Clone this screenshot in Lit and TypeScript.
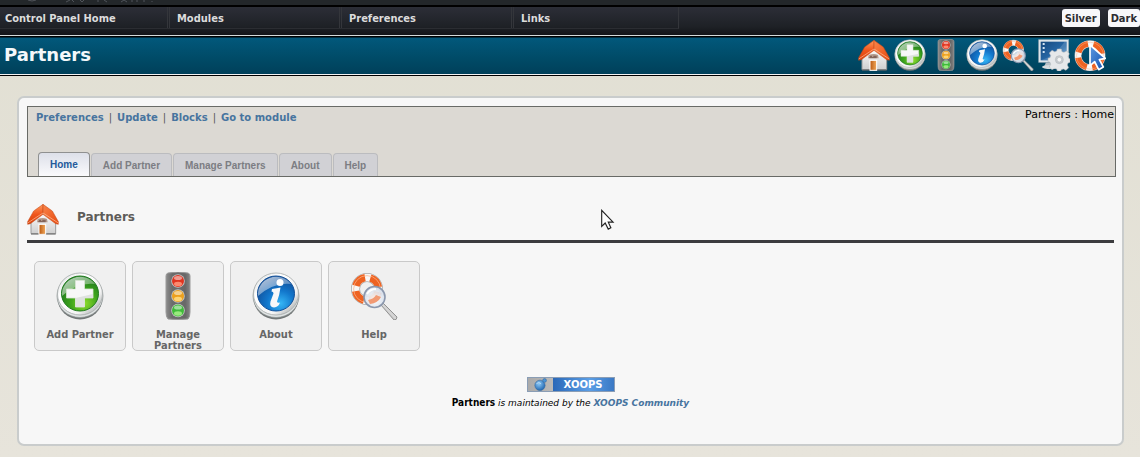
import { LitElement, html, svg, css } from "lit";
import { customElement, property } from "lit/decorators.js";

const home = svg`
  <defs>
    <linearGradient id="roof" x1="0" y1="0" x2="0" y2="1"><stop offset="0" stop-color="#ff9a5c"/><stop offset=".5" stop-color="#f0561c"/><stop offset="1" stop-color="#d8410c"/></linearGradient>
    <linearGradient id="side" x1="0" y1="0" x2="1" y2="1"><stop offset="0" stop-color="#f9854a"/><stop offset="1" stop-color="#e8490f"/></linearGradient>
    <linearGradient id="wall" x1="0" y1="0" x2="0" y2="1"><stop offset="0" stop-color="#fff"/><stop offset="1" stop-color="#cfcfcf"/></linearGradient>
    <linearGradient id="door" x1="0" y1="0" x2="1" y2="0"><stop offset="0" stop-color="#b8570f"/><stop offset="1" stop-color="#f3ab5e"/></linearGradient>
  </defs>
  <path d="M6 28 24 12 43 28V46H6Z" fill="url(#wall)" stroke="#9a9a9a" stroke-width="1.500"/>
  <path d="M6 46.500H43" stroke="#666" stroke-width="1.500"/>
  <rect x="18" y="32" width="10" height="15" fill="url(#door)" stroke="#fff" stroke-width="1.500"/>
  <path d="M16 24q8-3 14 0l1 5H15Z" fill="#b39a8c"/><path d="M18 26h3m2 0h5M17 28h11" stroke="#5c3a30"/>
  <path d="M24 2 10 12 1 28v4l4-1L24 17Z" fill="url(#roof)" stroke="#c24a18" stroke-width=".8"/>
  <path d="M24 2 38 12 47 28v4l-4-1L24 17Z" fill="url(#side)" stroke="#c24a18" stroke-width=".8"/>
  <path d="M1 30 24 15 47 30" fill="none" stroke="#ffc4a0" stroke-width="1"/>`;

const disc = (light: string, mid: string, dark: string) => svg`
  <defs>
    <linearGradient id="rim" x1="0" y1="0" x2="1" y2="1"><stop offset="0" stop-color="#d4d8d8"/><stop offset=".3" stop-color="#fff"/><stop offset=".7" stop-color="#f4f4f4"/><stop offset="1" stop-color="#8c9292"/></linearGradient>
    <radialGradient id="face" cx=".62" cy=".78" r=".72"><stop offset="0" stop-color=${light}/><stop offset=".5" stop-color=${mid}/><stop offset="1" stop-color=${dark}/></radialGradient>
    <linearGradient id="shine" x1="0" y1="0" x2="1" y2="1"><stop offset="0" stop-color="#fff" stop-opacity=".75"/><stop offset="1" stop-color="#fff" stop-opacity=".1"/></linearGradient>
  </defs>
  <ellipse cx="24" cy="26" rx="22.500" ry="21.500" fill="#727777"/>
  <ellipse cx="24" cy="24" rx="23" ry="21.500" fill="#dfe3e3" stroke="#8d9393" stroke-width=".7"/>
  <ellipse cx="24" cy="22" rx="22.500" ry="21" fill="url(#rim)" stroke="#a4aaaa" stroke-width=".8"/>
  <ellipse cx="24" cy="21.500" rx="18.500" ry="17.500" fill="url(#face)" stroke=${dark}/>
  <path d="M6 24a18.300 17.300 0 0 1 33-12Q22 10 6 24Z" fill="url(#shine)"/>`;

const add = svg`${disc("#8fdc2c", "#3fa51c", "#1f7a1e")}
  <path d="M19.500 8.500h9v8.500h8.500v9h-8.500v9h-9v-9h-9v-9h9Z" fill="#f7f7f7" stroke="#dbe6d6" stroke-width=".8"/>
  <path d="M19.500 26v9h9v-9h8.500v-4Z" fill="#dfe2df"/>`;

const info = svg`${disc("#35b6f5", "#1277cc", "#114f99")}
  <circle cx="28" cy="10.500" r="3.500" fill="#fff"/>
  <path d="M20 17q5-1 8.500-1.500-1 8-3.500 14 .5 2 3 1-1.500 4.500-6 5-5-.5-3.500-6l3-8q0-2-2-2Z" fill="#f6f8f9"/>`;

const lamp = (cy: number, fill: string, glow: string) => svg`
  <circle cx="24" cy=${cy} r="6.800" fill="#c4c4c4"/>
  <circle cx="24" cy=${cy} r="6" fill=${fill}/>
  <ellipse cx="24" cy=${cy + 3} rx="4" ry="2.200" fill=${glow} opacity=".9"/>
  <ellipse cx="24" cy=${cy - 3} rx="4" ry="2" fill="#fff" opacity=".5"/>`;

const traffic = svg`
  <defs><linearGradient id="box" x1="0" y1="0" x2="1" y2="0"><stop offset="0" stop-color="#8d8d8d"/><stop offset=".25" stop-color="#6c6c6c"/><stop offset=".8" stop-color="#686868"/><stop offset="1" stop-color="#858585"/></linearGradient></defs>
  <path d="M14 1q10-2 20 0 2 .5 2 3v36q0 5-2 7-10 1-20 0-2-2-2-7V4q0-2.500 2-3Z" fill="url(#box)" stroke="#9a9a9a" stroke-width="1"/>
  ${lamp(9, "#e03420", "#ff9277")}${lamp(24, "#eda01d", "#ffd97d")}${lamp(38.5, "#3fbb3a", "#a3ee86")}`;

const buoy = (cx: number, cy: number, r: number, w: number) => {
  const quarter = (2 * Math.PI * r) / 4;
  return svg`
  <circle cx=${cx} cy=${cy} r=${r} fill="none" stroke="#a9a9a9" stroke-width=${w + 1.5}/>
  <circle cx=${cx} cy=${cy} r=${r} fill="none" stroke="#f7f7f7" stroke-width=${w}/>
  <circle cx=${cx} cy=${cy} r=${r} fill="none" stroke="#ee6322" stroke-width=${w}
    stroke-dasharray="${quarter * 0.7} ${quarter * 0.3}" stroke-dashoffset=${-quarter * 0.17}/>
  <circle cx=${cx} cy=${cy} r=${r + w / 4} fill="none" stroke="#ffb184" stroke-width="1" opacity=".7"/>`;
};

const help = svg`
  <defs>
    <radialGradient id="lens" cx=".5" cy=".6" r=".6"><stop offset="0" stop-color="#fff"/><stop offset="1" stop-color="#cfd9e8"/></radialGradient>
    <linearGradient id="grip" x1="0" y1="1" x2="1" y2="0"><stop offset="0" stop-color="#666"/><stop offset=".5" stop-color="#d8d8d8"/><stop offset="1" stop-color="#777"/></linearGradient>
  </defs>
  ${buoy(17, 17, 11.5, 7.5)}
  <path d="m31 33 2-2 14 14q0 3-3 3Z" fill="url(#grip)" stroke="#808080" stroke-width=".8"/>
  <circle cx="24.500" cy="25" r="10.500" fill="url(#lens)" fill-opacity=".9" stroke="#8b97ad" stroke-width="1.600"/>
  <path d="M18 28q6-1 8-5l5 2q-3 6-11 7Z" fill="#f19a74"/>
  <path d="M17 22q3-5 9-5" stroke="#fff" stroke-width="2" fill="none"/>`;

const settings = svg`
  <defs><linearGradient id="screen" x1="0" y1="0" x2="1" y2="1"><stop offset="0" stop-color="#17497f"/><stop offset=".6" stop-color="#2769a8"/><stop offset="1" stop-color="#7eb4de"/></linearGradient></defs>
  <path d="M12 35h16l3 7H9Z" fill="#b8c0c6"/><ellipse cx="19" cy="42" rx="13" ry="3" fill="#d6dbde"/>
  <rect x="1" y="1" width="45" height="34" fill="#dfe5e9" stroke="#8fa3b1"/>
  <rect x="4" y="4" width="39" height="28" fill="url(#screen)"/>
  <path d="M7 6h3v3H7zm0 6h3v3H7zm0 6h3v3H7z" fill="#d3e5f4"/><path d="M4 32Q26 25 40 4h3v28Z" fill="#fff" opacity=".16"/>
  <g fill="#e6e8ea" stroke="#aeb3b7" stroke-width=".8">
    <path d="M29 15h6l1 4 3 1 4-2 4 4-2 4 1 3 2 1v5l-3 1-1 3 2 4-4 4-4-2-3 1-1 2h-5l-1-3-3-1-4 2-4-4 2-4-1-3-3-1v-5l3-1 1-3-2-4 4-4 4 2 3-1Z"/>
    <circle cx="32" cy="31" r="6" fill="#c9cdd1"/><circle cx="32" cy="31" r="3.500" fill="#f5f5f5"/>
  </g>`;

const guide = svg`
  <defs><linearGradient id="arrow" x1="0" y1="0" x2="1" y2="1"><stop offset="0" stop-color="#5f9ae2"/><stop offset="1" stop-color="#0e4fae"/></linearGradient></defs>
  ${buoy(24, 25, 18, 9)}
  <path d="M24 9v31l7-6 6 12 7-4-6-11 9-2Z" fill="url(#arrow)" stroke="#fff" stroke-width="2.500" stroke-linejoin="round"/>`;

const globe = svg`
  <defs><radialGradient id="orb" cx=".4" cy=".35" r=".7"><stop offset="0" stop-color="#8cc8f5"/><stop offset="1" stop-color="#1b62ae"/></radialGradient></defs>
  <circle cx="22" cy="27" r="19" fill="url(#orb)" stroke="#33689e" stroke-width="2"/>
  <circle cx="39" cy="9" r="7" fill="#4a93d6" stroke="#33689e" stroke-width="2"/>
  <path d="M9 21q9-9 17 0" stroke="#c5e3fa" stroke-width="3" fill="none"/>`;

const pointer = svg`<path d="M13 3v37l8-8 7 14 6-3-6-13h11Z" fill="#fff" stroke="#222" stroke-width="2.600"/>`;

const shapes: Record<string, unknown> = { home, add, traffic, info, help, settings, guide, globe, pointer };

@customElement("app-icon")
export class AppIcon extends LitElement {
  @property() name = "home";

  static styles = css`
    :host { display: block; width: 32px; height: 32px; flex: none; }
    svg { display: block; width: 100%; height: 100%; }
  `;

  render() {
    return html`<svg viewBox="0 0 48 48" aria-hidden="true">${shapes[this.name]}</svg>`;
  }
}

@customElement("app-root")
export class AppRoot extends LitElement {
  private menu = ["Control Panel Home", "Modules", "Preferences", "Links"];
  private tools = [
    ["home", "Home"], ["add", "Add Partner"], ["traffic", "Manage Partners"], ["info", "About"],
    ["help", "Help"], ["settings", "Preferences"], ["guide", "Guide"],
  ];
  private actions = ["Preferences", "Update", "Blocks", "Go to module"];
  private tabs = ["Home", "Add Partner", "Manage Partners", "About", "Help"];
  private tiles = [["add", "Add Partner"], ["traffic", "Manage Partners"], ["info", "About"], ["help", "Help"]];

  static styles = css`
    :host {
      display: flex;
      flex-direction: column;
      position: relative;
      box-sizing: border-box;
      min-height: 100vh;
      background: linear-gradient(#e1dfd3, #e7e4db);
      font-family: "DejaVu Sans", Verdana, sans-serif;
      font-size: 10px;
      color: #000;
    }
    * { box-sizing: border-box; }
    a { text-decoration: none; color: inherit; }
    h1, h2, p { margin: 0; }
    .strip { height: 7px; padding-left: 28px; background: #23272a; border-bottom: 2px solid #000; }
    .strip svg { display: block; }
    .nav {
      display: flex;
      height: 28px;
      background: linear-gradient(#2c2e37, #1e2126 70%, #131418);
      font-family: "DejaVu Sans Condensed", Tahoma, sans-serif;
      font-size: 11px;
      font-weight: bold;
      color: #dcdcdc;
    }
    .nav-item {
      width: 172px;
      height: 22px;
      padding-left: 5px;
      line-height: 24px;
      border-bottom: 1px solid #2b2d32;
      background: linear-gradient(90deg, transparent 167px, #34363b 167px 168px, transparent 168px 169px, #34363b 169px 170px, transparent 170px);
    }
    .nav-item:nth-child(4) {
      width: 163px;
      border-right: 1px solid #34363b;
      margin-left: 0;
    }
    .themes { display: flex; gap: 8px; margin-left: auto; padding-top: 2px; }
    .theme {
      height: 18px;
      padding: 0 3px;
      border: 0;
      border-radius: 3px;
      background: #f8f8fa;
      color: #2c2c30;
      font: bold 11px/19px "DejaVu Sans Condensed", Tahoma, sans-serif;
    }
    .titlebar {
      display: flex;
      align-items: center;
      justify-content: space-between;
      height: 41px;
      padding: 0 34px 2px 4px;
      border-top: 1px solid #d5dbdb;
      border-bottom: 1px solid #000;
      background: linear-gradient(#000 1px, #02587b 2px, #004a66 60%, #00405a 38px, #f4f4f4 38px);
      color: #f4f8fa;
    }
    .titlebar h1 { font-size: 18px; line-height: 24px; }
    .tools { display: flex; gap: 4px; }
    .panel {
      flex: 1;
      margin: 20px 16px 11px 17px;
      padding: 8px 6px 8px 8px;
      border: 2px solid #c9cccc;
      border-radius: 7px;
      background: #f7f7f7;
    }
    .header {
      display: grid;
      grid-template-columns: 1fr auto;
      align-content: space-between;
      height: 71px;
      padding: 0 1px 0 8px;
      border: 1px solid #686a66;
      background: #dcd9d3;
    }
    .actions { display: flex; gap: 5px; padding-top: 5px; line-height: 12px; font-weight: bold; color: #47749f; }
    .sep { font-weight: normal; color: #555; }
    .crumbs { padding-top: 2px; font-size: 11px; line-height: 12px; }
    .tabs { display: flex; align-items: flex-end; gap: 1px; grid-column: 1 / -1; padding-left: 2px; }
    .tab {
      height: 23px;
      padding: 0 11px;
      border: 1px solid #bbbcbf;
      border-bottom: 0;
      border-radius: 4px 4px 0 0;
      background: #d1d1d5;
      font: bold 10px/24px "Liberation Sans", Arial, sans-serif;
      color: #7c7d83;
    }
    .tab.on { height: 24px; border-color: #8f9090; background: linear-gradient(#dde0e9, #fafafc); color: #245a9b; }
    .heading {
      display: flex;
      gap: 18px;
      height: 66px;
      margin-right: 2px;
      padding-top: 26px;
      border-bottom: 3px solid #3c3c3f;
      color: #5e5c59;
    }
    .heading h2 { padding-top: 6px; font-size: 12px; line-height: 16px; }
    .tiles { display: flex; flex-wrap: wrap; gap: 6px; padding: 18px 7px 0; }
    .tile {
      display: flex;
      flex-direction: column;
      align-items: center;
      gap: 9px;
      width: 92px;
      height: 90px;
      padding-top: 10px;
      border: 1px solid #c9c9c9;
      border-radius: 5px;
      background: #f0f0f0;
      color: #666;
      font: bold 11px/11px "DejaVu Sans Condensed", Tahoma, sans-serif;
      text-align: center;
    }
    .tile app-icon { width: 48px; height: 48px; }
    .footer { display: flex; flex-direction: column; align-items: center; gap: 5px; padding: 26px 2px 0 0; line-height: 12px; }
    .badge {
      display: flex;
      width: 88px;
      height: 15px;
      border: 1px solid #8a9db5;
      background: linear-gradient(90deg, #aaa, #e4e0dc);
      color: #fff;
      font-weight: bold;
    }
    .badge app-icon { width: 25px; height: 13px; }
    .badge span { flex: 1; background: linear-gradient(90deg, #2a68b8, #5a9ee6 60%, #3a78c4); line-height: 13px; text-align: center; }
    .credit { font-size: 9px; font-style: italic; word-break: normal; }
    .credit b { font: bold 10px "DejaVu Sans Condensed", Tahoma, sans-serif; }
    .credit a { font-weight: bold; color: #47749f; }
    .cursor { position: absolute; left: 596px; top: 209px; width: 21px; height: 21px; }
  `;

  render() {
    return html`
      <div class="strip">
        <svg width="130" height="3" aria-hidden="true">
          <path d="M0 0q4 2 8 0M38 2l4-2m2 0 2 2M52 0l2 2 2-2M70 2V0m6 0 3 2M93 2l3-2 3 2M104 0v2m5-2v2m7-2v2m8-1v1" fill="none" stroke="#50545a"/>
        </svg>
      </div>
      <nav class="nav" aria-label="Control panel">
        ${this.menu.map((m) => html`<a class="nav-item" href="#">${m}</a>`)}
        <div class="themes">
          <button class="theme">Silver</button>
          <button class="theme">Dark</button>
        </div>
      </nav>
      <header class="titlebar">
        <h1>Partners</h1>
        <div class="tools">
          ${this.tools.map(([icon, label]) => html`<a href="#" aria-label=${label}><app-icon name=${icon}></app-icon></a>`)}
        </div>
      </header>
      <main class="panel">
        <div class="header">
          <div class="actions">
            ${this.actions.map((a, i) => html`${i ? html`<span class="sep">|</span>` : ""}<a href="#">${a}</a>`)}
          </div>
          <div class="crumbs">Partners : Home</div>
          <nav class="tabs" aria-label="Module">
            ${this.tabs.map((t, i) => html`<a class="tab ${i === 0 ? "on" : ""}" href="#">${t}</a>`)}
          </nav>
        </div>
        <div class="heading"><app-icon name="home"></app-icon><h2>Partners</h2></div>
        <div class="tiles">
          ${this.tiles.map(([icon, label]) => html`<a class="tile" href="#"><app-icon name=${icon}></app-icon>${label}</a>`)}
        </div>
        <footer class="footer">
          <a class="badge" href="#"><app-icon name="globe"></app-icon><span>XOOPS</span></a>
          <p class="credit"><b>Partners</b> is maintained by the <a href="#">XOOPS Community</a></p>
        </footer>
      </main>
      <app-icon class="cursor" name="pointer"></app-icon>
    `;
  }
}
